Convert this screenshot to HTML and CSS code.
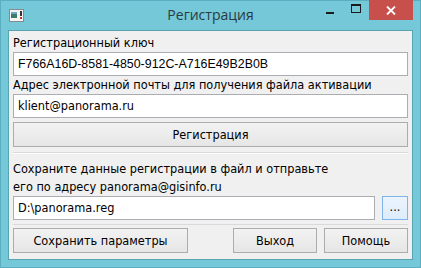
FILE: index.html
```html
<!DOCTYPE html>
<html lang="ru">
<head>
    <meta charset="UTF-8">
    <title>Регистрация</title>
    <link rel="stylesheet" href="styles.css">
</head>
<body>
    <div class="window">
        <div class="titlebar">
            <div class="app-icon">
                <svg width="15" height="13" viewBox="0 0 15 13">
                    <rect x="0.5" y="0.5" width="14" height="12" fill="#f4f4f4" stroke="#8a8a8a"/>
                    <rect x="2" y="3" width="6" height="6" fill="#3c7a6a"/>
                    <rect x="2" y="3" width="6" height="2" fill="#6fa8c0"/>
                    <rect x="11" y="2" width="2" height="5" fill="#333"/>
                    <rect x="11" y="8" width="2" height="2" fill="#c03030"/>
                </svg>
            </div>
            <div class="caption">Регистрация</div>
            <div class="controls">
                <div class="ctl ctl-min"><span></span></div>
                <div class="ctl ctl-max"><span></span></div>
                <div class="ctl ctl-close">
                    <svg width="10" height="9" viewBox="0 0 10 9">
                        <path d="M1 0.5 L9 8.5 M9 0.5 L1 8.5" stroke="#fff" stroke-width="1.8"/>
                    </svg>
                </div>
            </div>
        </div>
        <div class="client">
            <div class="group">
                <div class="label">Регистрационный ключ</div>
                <div class="field key">F766A16D-8581-4850-912C-A716E49B2B0B</div>
                <div class="label">Адрес электронной почты для получения файла активации</div>
                <div class="field">klient@panorama.ru</div>
                <div class="button wide">Регистрация</div>
            </div>
            <div class="group second">
                <div class="label">Сохраните данные регистрации в файл и отправьте</div>
                <div class="label">его по адресу panorama@gisinfo.ru</div>
                <div class="file-row">
                    <div class="field grow">D:\panorama.reg</div>
                    <div class="button browse">...</div>
                </div>
            </div>
            <div class="actions">
                <div class="button save">Сохранить параметры</div>
                <div class="spacer"></div>
                <div class="button exit">Выход</div>
                <div class="button help">Помощь</div>
            </div>
        </div>
    </div>
</body>
</html>
```

FILE: styles.css
```css
body {
    margin: 0;
    padding: 0;
    font-family: "DejaVu Sans Condensed", "DejaVu Sans", sans-serif;
    font-size: 12.6px;
    color: #000;
}
.window {
    width: 421px;
    height: 268px;
    background-color: #74c8d7;
    display: flex;
    flex-direction: column;
    box-sizing: border-box;
    border: 1px solid #5aaec0;
}
.titlebar {
    height: 29px;
    display: grid;
    grid-template-columns: 1fr auto 1fr;
    align-items: start;
}
.app-icon {
    padding: 8px 0 0 8px;
}
.caption {
    font-family: "Open Sans", "Noto Sans", sans-serif;
    font-size: 14px;
    color: #2a3a40;
    padding-top: 4px;
}
.controls {
    display: flex;
    justify-content: flex-end;
    margin-top: -1px;
    padding-right: 7px;
}
.ctl {
    height: 20px;
    display: flex;
    align-items: center;
    justify-content: center;
}
.ctl-min { width: 26px; }
.ctl-min span {
    width: 8px;
    height: 2px;
    margin-top: 5px;
    background: #1a1a1a;
}
.ctl-max { width: 26px; }
.ctl-max span {
    width: 8px;
    height: 6px;
    border: 1px solid #1a1a1a;
    border-top-width: 2px;
    margin-top: -3px;
}
.ctl-close {
    width: 44px;
    background-color: #c8504c;
}
.client {
    flex: 1;
    margin: 0 7px 7px 7px;
    background-color: #f0f0f0;
    border: 1px solid #5aa3b3;
    padding: 3px 4px 0 4px;
    display: flex;
    flex-direction: column;
}
.group {
    display: flex;
    flex-direction: column;
    padding-bottom: 5px;
    border-bottom: 1px solid #dadada;
}
.group.second {
    padding-top: 6px;
    padding-bottom: 4px;
    border-top: 1px solid #fff;
}
.label {
    height: 18px;
    line-height: 18px;
    white-space: nowrap;
}
.field {
    height: 24px;
    box-sizing: border-box;
    border: 1px solid #abadb3;
    background: #fff;
    line-height: 22px;
    padding-left: 4px;
    white-space: nowrap;
}
.field.key {
    font-family: "Liberation Sans", Arial, sans-serif;
    font-size: 12.4px;
}
.button {
    height: 25px;
    box-sizing: border-box;
    border: 1px solid #acacac;
    background: linear-gradient(#f2f2f2, #e6e6e6);
    display: flex;
    align-items: center;
    justify-content: center;
    white-space: nowrap;
}
.button.wide {
    margin-top: 4px;
}
.file-row {
    display: flex;
    gap: 7px;
}
.grow {
    flex: 1;
}
.button.browse {
    width: 26px;
    height: 24px;
    border-color: #7eb4ea;
    background: linear-gradient(#ecf4fc, #dcecfc);
    padding-bottom: 4px;
}
.actions {
    display: flex;
    gap: 7px;
    margin-top: 3px;
}
.save { width: 175px; }
.spacer { flex: 1; }
.exit { width: 84px; }
.help { width: 84px; }
```
